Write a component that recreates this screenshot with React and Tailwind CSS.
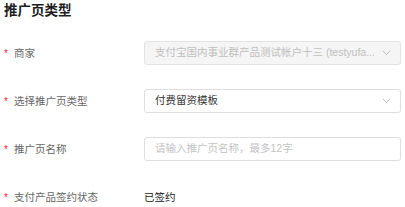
import React from 'react';

const font = { fontFamily: '"Liberation Sans", "Noto Sans CJK SC", sans-serif' };

const Chevron = () => (
  <svg width="9" height="6" viewBox="0 0 9 6" className="shrink-0">
    <path d="M0.8 0.8 L4.5 4.6 L8.2 0.8" fill="none" stroke="#bfbfbf" strokeWidth="1" />
  </svg>
);

const Label = ({ children }) => (
  <div className="w-[140px] flex items-center shrink-0">
    <span className="w-[10px] text-[10px] text-[#f5222d] leading-none pt-[1px]">*</span>
    <span className="text-[10.5px] text-[#666666] leading-none">{children}</span>
  </div>
);

const App = () => {
  return (
    <div className="w-[405px] h-[207px] bg-white pl-1 pt-[3px] overflow-hidden" style={font}>
      <h2 className="text-[13.5px] leading-[16px] font-bold text-[#1f1f1f]">推广页类型</h2>

      <div className="mt-[22px] flex flex-col gap-[24px]">
        {/* 商家 */}
        <div className="flex items-center h-[24px]">
          <Label>商家</Label>
          <div className="w-[257px] h-[24px] flex items-center justify-between pl-[10px] pr-[9px] bg-[#f5f5f5] border border-[#e3e3e3] rounded-[3px]">
            <span className="text-[10.5px] text-[#bfbfbf] whitespace-nowrap overflow-hidden">
              支付宝国内事业群产品测试帐户十三 (testyufa...
            </span>
            <Chevron />
          </div>
        </div>

        {/* 选择推广页类型 */}
        <div className="flex items-center h-[24px]">
          <Label>选择推广页类型</Label>
          <div className="w-[257px] h-[24px] flex items-center justify-between pl-[10px] pr-[9px] bg-white border border-[#dedede] rounded-[3px]">
            <span className="text-[10.5px] text-[#333333] whitespace-nowrap">付费留资模板</span>
            <Chevron />
          </div>
        </div>

        {/* 推广页名称 */}
        <div className="flex items-center h-[24px]">
          <Label>推广页名称</Label>
          <div className="w-[257px] h-[24px] flex items-center pl-[10px] bg-white border border-[#dedede] rounded-[3px]">
            <span className="text-[10.5px] text-[#c4c4c4] whitespace-nowrap">请输入推广页名称，最多12字</span>
          </div>
        </div>

        {/* 支付产品签约状态 */}
        <div className="flex items-center h-[24px]">
          <Label>支付产品签约状态</Label>
          <span className="text-[10.5px] text-[#222222] leading-none">已签约</span>
        </div>
      </div>
    </div>
  );
};

export default App;
